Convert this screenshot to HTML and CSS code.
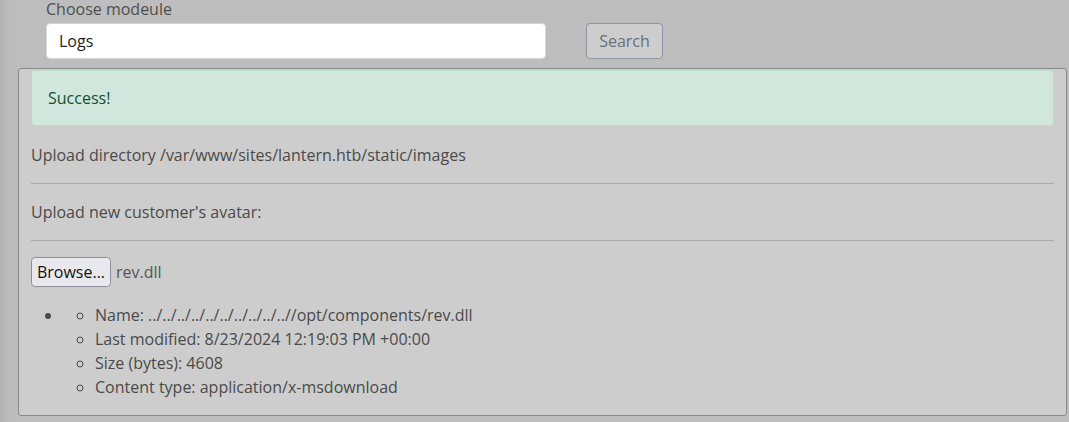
FILE: index.html
```html
<!DOCTYPE html>
<html>
<head>
<meta charset="utf-8">
<link rel="stylesheet" href="styles.css">
</head>
<body>
<div class="page">
  <form class="search-row">
    <div class="field">
      <label class="field-label">Choose modeule</label>
      <input class="text-input" type="text" value="Logs">
    </div>
    <button type="button" class="btn-search">Search</button>
  </form>
  <div class="panel">
    <div class="alert">Success!</div>
    <p class="line">Upload directory /var/www/sites/lantern.htb/static/images</p>
    <hr class="sep">
    <p class="line">Upload new customer's avatar:</p>
    <hr class="sep">
    <div class="file-row">
      <button type="button" class="btn-browse">Browse...</button>
      <span class="file-name">rev.dll</span>
    </div>
    <ul class="outer-list">
      <li>
        <ul class="inner-list">
          <li>Name: ../../../../../../../../../..//opt/components/rev.dll</li>
          <li>Last modified: 8/23/2024 12:19:03 PM +00:00</li>
          <li>Size (bytes): 4608</li>
          <li>Content type: application/x-msdownload</li>
        </ul>
      </li>
    </ul>
  </div>
</div>
</body>
</html>
```
FILE: styles.css
```css
* { box-sizing: border-box; }
html, body {
  margin: 0;
  padding: 0;
  height: 100%;
  overflow: hidden;
}
body {
  background: linear-gradient(to right, #b2b2b2 0, #b7b7b7 5px, #bdbdbd 9px, #bdbdbd 100%);
  font-family: "Open Sans", "Noto Sans", sans-serif;
  font-size: 16px;
  line-height: 24px;
  color: #4a4a4a;
}
.page {
  padding: 0 2px 0 18px;
}
.search-row {
  display: flex;
  align-items: flex-end;
  padding-left: 28px;
  margin: 0;
}
.field {
  width: 500px;
  display: flex;
  flex-direction: column;
}
.field-label {
  display: block;
  line-height: 22px;
  margin-top: -2px;
  margin-bottom: 3px;
  color: #4f4f4f;
}
.text-input {
  height: 36px;
  width: 500px;
  border: 1px solid #d6d6d6;
  border-radius: 4px;
  background: #fff;
  padding: 0 12px;
  font-family: inherit;
  font-size: 16px;
  color: #212529;
  outline: none;
}
.btn-search {
  margin-left: 40px;
  height: 36px;
  width: 77px;
  border: 1px solid #8c97a3;
  border-radius: 4px;
  background: #cdcdcd;
  color: #68717a;
  font-family: inherit;
  font-size: 16px;
  padding: 0;
}
.panel {
  margin-top: 9px;
  width: 1049px;
  height: 348px;
  background: #cdcdcd;
  border: 1px solid #8a8a8a;
  border-radius: 3px;
  padding: 1px 12px 0 12px;
}
.alert {
  height: 56px;
  background: #d1e7dd;
  border: 1px solid #bcdccb;
  border-radius: 4px;
  color: #0f5132;
  padding: 15px 16px;
  margin-bottom: 17px;
}
.line {
  margin: 0;
}
.sep {
  margin: 16px 0;
  border: 0;
  border-top: 1px solid #a9a9a9;
  height: 0;
}
.file-row {
  display: flex;
  align-items: center;
  margin-top: 16px;
  height: 30px;
}
.btn-browse {
  height: 30px;
  width: 80px;
  padding: 0;
  background: #e9e9ed;
  border: 1px solid #8f8f9d;
  border-radius: 4px;
  color: #111;
  font-family: inherit;
  font-size: 16px;
}
.file-name {
  margin-left: 5px;
  color: #555;
}
.outer-list {
  margin: 16px 0 16px 0;
  padding-left: 32px;
  list-style: disc;
}
.inner-list {
  margin: 0;
  padding-left: 32px;
  list-style: circle;
}
```
